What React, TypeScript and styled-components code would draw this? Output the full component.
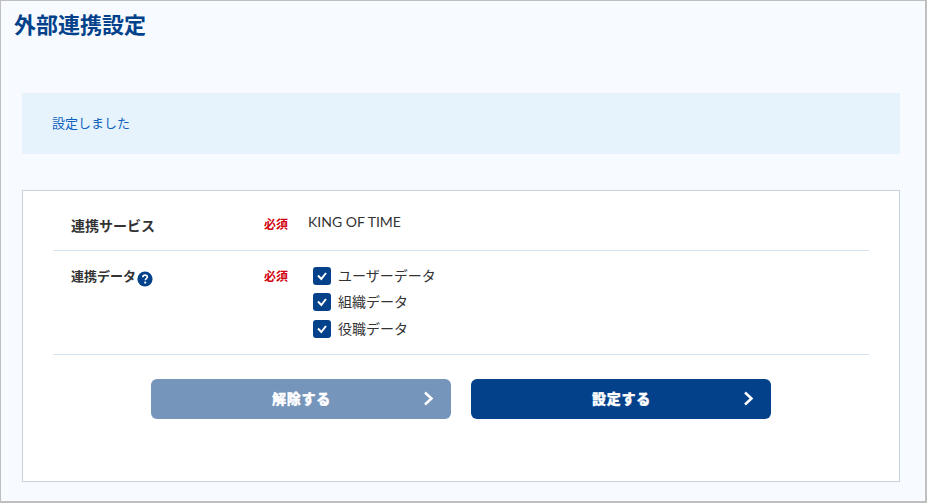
import React from "react";
import styled, { createGlobalStyle } from "styled-components";

const GlobalStyle = createGlobalStyle`
  * { box-sizing: border-box; }
  body { margin: 0; font-family: Lato, "Noto Sans CJK JP", sans-serif; color: #333; }
`;

const Page = styled.main`
  height: 503px;
  padding: 0 25px 0 21px;
  background: #f7fbff;
  border: solid #bfbfbf;
  border-width: 1px 2px 2px 1px;
  overflow: hidden;
`;

const Title = styled.h1`
  margin: 7px 0 0 -8px;
  height: 34px;
  line-height: 34px;
  font-size: 22px;
  font-weight: 700;
  color: #03428b;
`;

const Notice = styled.p`
  margin: 51px 0 36px;
  height: 61px;
  padding-left: 30px;
  line-height: 61px;
  font-size: 13px;
  color: #0c62bd;
  background: #e6f3fd;
`;

const Card = styled.section`
  height: 292px;
  padding: 0 30px;
  background: #fff;
  border: 1px solid #c7d2e1;
`;

const Row = styled.div<{ $height: number }>`
  display: grid;
  grid-template-columns: 193px 44px 1fr;
  align-items: start;
  height: ${(p) => p.$height}px;
  padding-left: 18px;
  border-bottom: 1px solid #d4e3f2;
`;

const Label = styled.div<{ $size: number; $top: number }>`
  display: flex;
  align-items: center;
  gap: 1px;
  height: 20px;
  margin-top: ${(p) => p.$top}px;
  line-height: 20px;
  font-size: ${(p) => p.$size}px;
  font-weight: 700;
`;

const HelpIcon = styled.svg`
  width: 16px;
  height: 16px;
  margin-top: 6px;
`;

const Required = styled.span<{ $top: number }>`
  height: 18px;
  margin-top: ${(p) => p.$top}px;
  line-height: 18px;
  font-size: 12px;
  font-weight: 700;
  color: #d0000c;
`;

const Value = styled.span`
  margin-top: 21px;
  line-height: 20px;
  font-size: 14px;
`;

const Options = styled.div`
  display: grid;
  grid-template-rows: 26px 27px 18px;
  margin: 16px 0 0 5px;
`;

const Option = styled.label`
  display: flex;
  align-items: center;
  gap: 7px;
  height: 18px;
  line-height: 18px;
  font-size: 14px;
`;

const CheckBox = styled.span`
  display: flex;
  width: 18px;
  height: 18px;
  border-radius: 3px;
  background: #03428b;
`;

const Actions = styled.div`
  display: flex;
  gap: 20px;
  margin: 24px 0 0 98px;
`;

const Button = styled.button<{ $muted?: boolean }>`
  display: grid;
  grid-template-columns: 30px 1fr 30px;
  align-items: center;
  width: 300px;
  height: 40px;
  padding: 0;
  border: 0;
  border-radius: 6px;
  background: ${(p) => (p.$muted ? "#7695bb" : "#03428b")};
  color: #fff;
  font: 900 14px/20px Lato, "Noto Sans CJK JP", sans-serif;
  letter-spacing: 0.7px;
`;

const ButtonText = styled.span`
  grid-column: 2;
  padding-left: 1px;
  -webkit-text-stroke: 0.3px #fff;
`;

const Chevron = () => (
  <svg width="14" height="16" viewBox="0 0 14 16" fill="none" stroke="#fff" strokeWidth="2.5">
    <path d="M4 1.5 10.5 7.5 4 13.5" />
  </svg>
);

const Check = () => (
  <CheckBox>
    <svg width="18" height="18" viewBox="0 0 18 18" fill="none" stroke="#fff" strokeWidth="2">
      <path d="M5 8.5 8.3 12 13 6" />
    </svg>
  </CheckBox>
);

const items = ["ユーザーデータ", "組織データ", "役職データ"];

export default function App() {
  return (
    <>
      <GlobalStyle />
      <Page lang="ja">
        <Title>外部連携設定</Title>
        <Notice>設定しました</Notice>
        <Card>
          <Row $height={60}>
            <Label $size={14} $top={25}>連携サービス</Label>
            <Required $top={25}>必須</Required>
            <Value>KING OF TIME</Value>
          </Row>
          <Row $height={104}>
            <Label $size={13} $top={15}>
              連携データ
              <HelpIcon viewBox="0 0 16 16" fill="none">
                <circle cx="8" cy="8" r="7.6" fill="#03428b" />
                <path d="M5.8 6.3C5.9 4.8 6.8 4.1 8 4.1c1.4 0 2.3.8 2.3 1.9 0 1.5-2 1.6-2 3.2" stroke="#fff" strokeWidth="1.7" />
                <circle cx="8.2" cy="11.6" r="1.1" fill="#fff" />
              </HelpIcon>
            </Label>
            <Required $top={17}>必須</Required>
            <Options>
              {items.map((item) => (
                <Option key={item}>
                  <Check />
                  {item}
                </Option>
              ))}
            </Options>
          </Row>
          <Actions>
            <Button $muted>
              <ButtonText>解除する</ButtonText>
              <Chevron />
            </Button>
            <Button>
              <ButtonText>設定する</ButtonText>
              <Chevron />
            </Button>
          </Actions>
        </Card>
      </Page>
    </>
  );
}
